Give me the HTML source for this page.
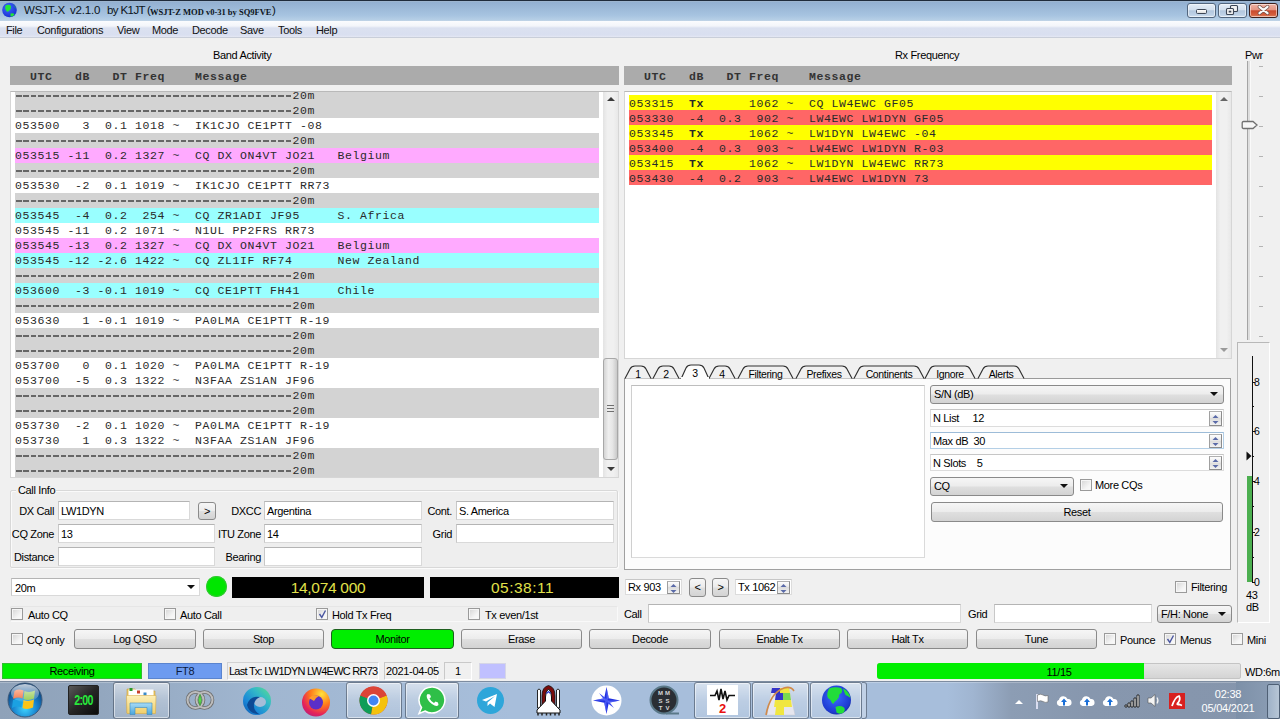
<!DOCTYPE html><html><head><meta charset="utf-8"><title>WSJT-X</title><style>
*{box-sizing:border-box;margin:0;padding:0}
html,body{width:1280px;height:719px;overflow:hidden;background:#f0f0f0;font-family:"Liberation Sans",sans-serif;font-size:11px;color:#000}
.a{position:absolute}
.t{position:absolute;white-space:pre;line-height:13px;letter-spacing:-0.35px}
.m{font-family:"Liberation Mono",monospace;font-size:11.5px;letter-spacing:0.6px;white-space:pre;line-height:15px;height:15px;color:#2a2a2a}
.fld{position:absolute;background:#fff;border:1px solid #d9d9d9;border-top-color:#b4b4b4;border-left-color:#c8c8c8}
.btn{position:absolute;border:1px solid #8a8a8a;border-radius:3px;background:linear-gradient(#f6f6f6 0%,#ececec 48%,#dfdfdf 52%,#d3d3d3 100%);text-align:center;white-space:pre;letter-spacing:-0.35px}
.cb{position:absolute;width:12px;height:12px;border:1px solid #9a9a9a;background:linear-gradient(135deg,#d4d4d4,#f4f4f4 65%,#fbfbfb);box-shadow:inset 0 0 0 1px #f6f6f6}
</style></head><body>
<div class="a" style="left:0px;top:0px;width:1280px;height:1px;background:#1f2b3b"></div>
<div class="a" style="left:0px;top:1px;width:1280px;height:20px;background:linear-gradient(#a8bbcf 0px,#93b0d1 1px,#a6c3e0 14px,#b6cfe6 19px,#c5d5e5 20px)"></div>
<svg class="a" style="left:1px;top:2px" width="17" height="16" viewBox="0 0 17 16">
<defs><radialGradient id="gl" cx="0.4" cy="0.35" r="0.7"><stop offset="0" stop-color="#3d6bff"/><stop offset="1" stop-color="#1a2bd0"/></radialGradient></defs>
<circle cx="8.5" cy="8" r="7.3" fill="url(#gl)"/>
<path d="M4.5 3.5 Q8 2 10 4 Q10.5 7 8 9 Q6 10.5 5 8.5 Q3.5 6 4.5 3.5Z" fill="#22e63a"/>
<path d="M9.5 11.5 Q12.5 10.5 13.5 12.5 Q11.5 15 9.5 14.2Z" fill="#22e63a"/>
<path d="M12 2.5 Q15 4 15.5 7 Q14 6 12 2.5Z" fill="#22c040" opacity="0.7"/>
</svg>
<div class="t" style="left:24px;top:4px;font-size:11.5px;letter-spacing:-0.2px;color:#0c1420">WSJT-X</div>
<div class="t" style="left:70px;top:4px;font-size:11.5px;letter-spacing:-0.2px;color:#0c1420">v2.1.0</div>
<div class="t" style="left:107px;top:4px;font-size:11.5px;letter-spacing:-0.6px;color:#0c1420">by K1JT</div>
<div class="t" style="left:147px;top:4px;font-size:11.5px;color:#0c1420">(</div>
<div class="t" style="left:150px;top:6px;font-family:'Liberation Serif',serif;font-weight:bold;font-size:8.5px;letter-spacing:0;color:#0c1420">WSJT-Z MOD v0-31 by SQ9FVE</div>
<div class="t" style="left:272px;top:4px;font-size:11.5px;color:#0c1420">)</div>
<div class="a" style="left:1187px;top:3px;width:29px;height:15px;background:linear-gradient(#e4edf7 0%,#d3e0ef 45%,#b3c7de 52%,#bfd2e7 85%,#d6e4f2 100%);border:1px solid #52667e;border-radius:3px;box-shadow:inset 0 0 0 1px rgba(255,255,255,0.5)"></div>
<div class="a" style="left:1218px;top:3px;width:29px;height:15px;background:linear-gradient(#e4edf7 0%,#d3e0ef 45%,#b3c7de 52%,#bfd2e7 85%,#d6e4f2 100%);border:1px solid #52667e;border-radius:3px;box-shadow:inset 0 0 0 1px rgba(255,255,255,0.5)"></div>
<div class="a" style="left:1249px;top:3px;width:29px;height:15px;background:linear-gradient(#efb2a4 0%,#e49583 45%,#c94a2e 52%,#d4603f 85%,#e58a6a 100%);border:1px solid #3e201c;border-radius:3px;box-shadow:inset 0 0 0 1px rgba(255,255,255,0.5)"></div>
<div class="a" style="left:1196px;top:9px;width:11px;height:5px;background:linear-gradient(#fff,#dcdcdc);border:1px solid #3c4656;border-radius:1.5px"></div>
<svg class="a" style="left:1225px;top:4px" width="14" height="12" viewBox="0 0 14 12">
<rect x="5.5" y="1.5" width="7" height="6" fill="#f2f2f2" stroke="#3c4656" stroke-width="1.1" rx="1"/>
<rect x="1.5" y="4.5" width="7" height="6" fill="#f2f2f2" stroke="#3c4656" stroke-width="1.1" rx="1"/>
<rect x="3.7" y="6.7" width="2.6" height="1.8" fill="#3c4656"/>
</svg>
<svg class="a" style="left:1257px;top:5px" width="13" height="10" viewBox="0 0 13 10">
<path d="M2.5 1.8 L10.5 8.2 M10.5 1.8 L2.5 8.2" stroke="#6a4a44" stroke-width="3.6" stroke-linecap="round"/>
<path d="M2.5 1.8 L10.5 8.2 M10.5 1.8 L2.5 8.2" stroke="#fafafa" stroke-width="2.3" stroke-linecap="round"/>
</svg>
<div class="a" style="left:0px;top:21px;width:1280px;height:17px;background:linear-gradient(#fbfcfe 0px,#f3f5fa 5px,#dbe1f0 7px,#d9dff0 14px,#e4e8f3 16px)"></div>
<div class="a" style="left:0px;top:37px;width:1280px;height:1px;background:#c9ced9"></div>
<div class="t" style="left:6px;top:24px;color:#111">File</div>
<div class="t" style="left:37px;top:24px;color:#111">Configurations</div>
<div class="t" style="left:117px;top:24px;color:#111">View</div>
<div class="t" style="left:152px;top:24px;color:#111">Mode</div>
<div class="t" style="left:192px;top:24px;color:#111">Decode</div>
<div class="t" style="left:240px;top:24px;color:#111">Save</div>
<div class="t" style="left:278px;top:24px;color:#111">Tools</div>
<div class="t" style="left:316px;top:24px;color:#111">Help</div>
<div class="t" style="left:213px;top:49px;">Band Activity</div>
<div class="t" style="left:895px;top:49px;">Rx Frequency</div>
<div class="t" style="left:1245px;top:49px;">Pwr</div>
<div class="a" style="left:10px;top:66px;width:609px;height:19px;background:#ababab"></div>
<div class="a m" style="left:15px;top:69px;font-weight:bold;color:#333">  UTC   dB   DT Freq    Message</div>
<div class="a" style="left:10px;top:91px;width:609px;height:387px;background:#fff;border:1px solid #d6d6d6;border-top-color:#b9b9b9"></div>
<div class="a" style="left:11px;top:92px;width:592px;height:385px;overflow:hidden">
<div class="a m" style="left:4px;top:-4px;width:584px;background:#d3d3d3"><div class="a" style="left:1px;top:7px;width:276px;height:2px;background:repeating-linear-gradient(90deg,#666 0,#666 5.5px,transparent 5.5px,transparent 7.5px)"></div>                                     20m</div>
<div class="a m" style="left:4px;top:11px;width:584px;background:#d3d3d3"><div class="a" style="left:1px;top:7px;width:276px;height:2px;background:repeating-linear-gradient(90deg,#666 0,#666 5.5px,transparent 5.5px,transparent 7.5px)"></div>                                     20m</div>
<div class="a m" style="left:4px;top:26px;width:584px;background:#ffffff">053500   3  0.1 1018 ~  IK1CJO CE1PTT -08</div>
<div class="a m" style="left:4px;top:41px;width:584px;background:#d3d3d3"><div class="a" style="left:1px;top:7px;width:276px;height:2px;background:repeating-linear-gradient(90deg,#666 0,#666 5.5px,transparent 5.5px,transparent 7.5px)"></div>                                     20m</div>
<div class="a m" style="left:4px;top:56px;width:584px;background:#ffaaff">053515 -11  0.2 1327 ~  CQ DX ON4VT JO21   Belgium</div>
<div class="a m" style="left:4px;top:71px;width:584px;background:#d3d3d3"><div class="a" style="left:1px;top:7px;width:276px;height:2px;background:repeating-linear-gradient(90deg,#666 0,#666 5.5px,transparent 5.5px,transparent 7.5px)"></div>                                     20m</div>
<div class="a m" style="left:4px;top:86px;width:584px;background:#ffffff">053530  -2  0.1 1019 ~  IK1CJO CE1PTT RR73</div>
<div class="a m" style="left:4px;top:101px;width:584px;background:#d3d3d3"><div class="a" style="left:1px;top:7px;width:276px;height:2px;background:repeating-linear-gradient(90deg,#666 0,#666 5.5px,transparent 5.5px,transparent 7.5px)"></div>                                     20m</div>
<div class="a m" style="left:4px;top:116px;width:584px;background:#99ffff">053545  -4  0.2  254 ~  CQ ZR1ADI JF95     S. Africa</div>
<div class="a m" style="left:4px;top:131px;width:584px;background:#ffffff">053545 -11  0.2 1071 ~  N1UL PP2FRS RR73</div>
<div class="a m" style="left:4px;top:146px;width:584px;background:#ffaaff">053545 -13  0.2 1327 ~  CQ DX ON4VT JO21   Belgium</div>
<div class="a m" style="left:4px;top:161px;width:584px;background:#99ffff">053545 -12 -2.6 1422 ~  CQ ZL1IF RF74      New Zealand</div>
<div class="a m" style="left:4px;top:176px;width:584px;background:#d3d3d3"><div class="a" style="left:1px;top:7px;width:276px;height:2px;background:repeating-linear-gradient(90deg,#666 0,#666 5.5px,transparent 5.5px,transparent 7.5px)"></div>                                     20m</div>
<div class="a m" style="left:4px;top:191px;width:584px;background:#99ffff">053600  -3 -0.1 1019 ~  CQ CE1PTT FH41     Chile</div>
<div class="a m" style="left:4px;top:206px;width:584px;background:#d3d3d3"><div class="a" style="left:1px;top:7px;width:276px;height:2px;background:repeating-linear-gradient(90deg,#666 0,#666 5.5px,transparent 5.5px,transparent 7.5px)"></div>                                     20m</div>
<div class="a m" style="left:4px;top:221px;width:584px;background:#ffffff">053630   1 -0.1 1019 ~  PA0LMA CE1PTT R-19</div>
<div class="a m" style="left:4px;top:236px;width:584px;background:#d3d3d3"><div class="a" style="left:1px;top:7px;width:276px;height:2px;background:repeating-linear-gradient(90deg,#666 0,#666 5.5px,transparent 5.5px,transparent 7.5px)"></div>                                     20m</div>
<div class="a m" style="left:4px;top:251px;width:584px;background:#d3d3d3"><div class="a" style="left:1px;top:7px;width:276px;height:2px;background:repeating-linear-gradient(90deg,#666 0,#666 5.5px,transparent 5.5px,transparent 7.5px)"></div>                                     20m</div>
<div class="a m" style="left:4px;top:266px;width:584px;background:#ffffff">053700   0  0.1 1020 ~  PA0LMA CE1PTT R-19</div>
<div class="a m" style="left:4px;top:281px;width:584px;background:#ffffff">053700  -5  0.3 1322 ~  N3FAA ZS1AN JF96</div>
<div class="a m" style="left:4px;top:296px;width:584px;background:#d3d3d3"><div class="a" style="left:1px;top:7px;width:276px;height:2px;background:repeating-linear-gradient(90deg,#666 0,#666 5.5px,transparent 5.5px,transparent 7.5px)"></div>                                     20m</div>
<div class="a m" style="left:4px;top:311px;width:584px;background:#d3d3d3"><div class="a" style="left:1px;top:7px;width:276px;height:2px;background:repeating-linear-gradient(90deg,#666 0,#666 5.5px,transparent 5.5px,transparent 7.5px)"></div>                                     20m</div>
<div class="a m" style="left:4px;top:326px;width:584px;background:#ffffff">053730  -2  0.1 1020 ~  PA0LMA CE1PTT R-19</div>
<div class="a m" style="left:4px;top:341px;width:584px;background:#ffffff">053730   1  0.3 1322 ~  N3FAA ZS1AN JF96</div>
<div class="a m" style="left:4px;top:356px;width:584px;background:#d3d3d3"><div class="a" style="left:1px;top:7px;width:276px;height:2px;background:repeating-linear-gradient(90deg,#666 0,#666 5.5px,transparent 5.5px,transparent 7.5px)"></div>                                     20m</div>
<div class="a m" style="left:4px;top:371px;width:584px;background:#d3d3d3"><div class="a" style="left:1px;top:7px;width:276px;height:2px;background:repeating-linear-gradient(90deg,#666 0,#666 5.5px,transparent 5.5px,transparent 7.5px)"></div>                                     20m</div>
</div>
<div class="a" style="left:603px;top:92px;width:15px;height:385px;background:linear-gradient(90deg,#e3e3e3,#f0f0f0 30%,#f0f0f0 70%,#e8e8e8)"></div>
<svg class="a" style="left:606px;top:96px" width="10" height="6"><path d="M1 5 L5 1 L9 5Z" fill="#3a3a3a"/></svg>
<svg class="a" style="left:606px;top:466px" width="10" height="6"><path d="M1 1 L5 5 L9 1Z" fill="#3a3a3a"/></svg>
<div class="a" style="left:603px;top:358px;width:15px;height:102px;background:linear-gradient(90deg,#d4d4d4,#efefef 35%,#e6e6e6 65%,#c9c9c9);border:1px solid #a8a8a8;border-radius:3px"></div>
<div class="a" style="left:607px;top:405px;width:7px;height:1px;background:#6f6f6f"></div>
<div class="a" style="left:607px;top:408px;width:7px;height:1px;background:#6f6f6f"></div>
<div class="a" style="left:607px;top:411px;width:7px;height:1px;background:#6f6f6f"></div>
<div class="a" style="left:624px;top:66px;width:608px;height:19px;background:#ababab"></div>
<div class="a m" style="left:629px;top:69px;font-weight:bold;color:#333">  UTC   dB   DT Freq    Message</div>
<div class="a" style="left:624px;top:91px;width:608px;height:268px;background:#fff;border:1px solid #d6d6d6;border-top-color:#b9b9b9"></div>
<div class="a m" style="left:629px;top:95px;width:583px;background:#ffff00;padding-top:1px">053315  <b>Tx</b>      1062 ~  CQ LW4EWC GF05</div>
<div class="a m" style="left:629px;top:110px;width:583px;background:#ff6666;padding-top:1px">053330  -4  0.3  902 ~  LW4EWC LW1DYN GF05</div>
<div class="a m" style="left:629px;top:125px;width:583px;background:#ffff00;padding-top:1px">053345  <b>Tx</b>      1062 ~  LW1DYN LW4EWC -04</div>
<div class="a m" style="left:629px;top:140px;width:583px;background:#ff6666;padding-top:1px">053400  -4  0.3  903 ~  LW4EWC LW1DYN R-03</div>
<div class="a m" style="left:629px;top:155px;width:583px;background:#ffff00;padding-top:1px">053415  <b>Tx</b>      1062 ~  LW1DYN LW4EWC RR73</div>
<div class="a m" style="left:629px;top:170px;width:583px;background:#ff6666;padding-top:1px">053430  -4  0.2  903 ~  LW4EWC LW1DYN 73</div>
<div class="a" style="left:1216px;top:92px;width:15px;height:266px;background:linear-gradient(90deg,#e3e3e3,#f0f0f0 30%,#f0f0f0 70%,#e8e8e8)"></div>
<svg class="a" style="left:1219px;top:96px" width="10" height="6"><path d="M1 5 L5 1 L9 5Z" fill="#666"/></svg>
<svg class="a" style="left:1219px;top:347px" width="10" height="6"><path d="M1 1 L5 5 L9 1Z" fill="#9a9a9a"/></svg>
<div class="a" style="left:1247px;top:61px;width:4px;height:279px;background:#dedede;border-left:1px solid #a4a4a4;border-right:1px solid #fafafa"></div>
<div class="a" style="left:1259px;top:66px;width:4px;height:1px;background:#b4b4b4"></div>
<div class="a" style="left:1259px;top:96px;width:4px;height:1px;background:#b4b4b4"></div>
<div class="a" style="left:1259px;top:126px;width:4px;height:1px;background:#b4b4b4"></div>
<div class="a" style="left:1259px;top:156px;width:4px;height:1px;background:#b4b4b4"></div>
<div class="a" style="left:1259px;top:186px;width:4px;height:1px;background:#b4b4b4"></div>
<div class="a" style="left:1259px;top:216px;width:4px;height:1px;background:#b4b4b4"></div>
<div class="a" style="left:1259px;top:246px;width:4px;height:1px;background:#b4b4b4"></div>
<div class="a" style="left:1259px;top:276px;width:4px;height:1px;background:#b4b4b4"></div>
<div class="a" style="left:1259px;top:306px;width:4px;height:1px;background:#b4b4b4"></div>
<div class="a" style="left:1259px;top:336px;width:4px;height:1px;background:#b4b4b4"></div>
<svg class="a" style="left:1241px;top:120px" width="18" height="10" viewBox="0 0 18 10">
<path d="M2.5 1.5 H12 L16 5 L12 8.5 H2.5 Q1.2 8.5 1.2 7 V3 Q1.2 1.5 2.5 1.5Z" fill="#f6f6f6" stroke="#707070" stroke-width="1.3"/></svg>
<div class="a" style="left:1237px;top:342px;width:33px;height:281px;border:1px solid #b8b8b8;border-right-color:#fff;border-bottom-color:#fff;background:#f0f0f0"></div>
<div class="a" style="left:1252px;top:356px;width:1px;height:227px;background:#111"></div>
<div class="a" style="left:1247px;top:476px;width:5px;height:106px;background:#4caf50"></div>
<svg class="a" style="left:1246px;top:451px" width="6" height="10"><path d="M0.5 0.5 L5.5 5 L0.5 9.5Z" fill="#111"/></svg>
<div class="a" style="left:1252px;top:382px;width:3px;height:1px;background:#111"></div>
<div class="t" style="left:1254px;top:376px;font-size:10.5px">8</div>
<div class="a" style="left:1252px;top:431px;width:3px;height:1px;background:#111"></div>
<div class="t" style="left:1254px;top:425px;font-size:10.5px">6</div>
<div class="a" style="left:1252px;top:481px;width:3px;height:1px;background:#111"></div>
<div class="t" style="left:1254px;top:475px;font-size:10.5px">4</div>
<div class="a" style="left:1252px;top:532px;width:3px;height:1px;background:#111"></div>
<div class="t" style="left:1254px;top:526px;font-size:10.5px">2</div>
<div class="a" style="left:1252px;top:582px;width:3px;height:1px;background:#111"></div>
<div class="t" style="left:1254px;top:576px;font-size:10.5px">0</div>
<div class="a" style="left:1252px;top:406px;width:2px;height:1px;background:#111"></div>
<div class="a" style="left:1252px;top:456px;width:2px;height:1px;background:#111"></div>
<div class="a" style="left:1252px;top:506px;width:2px;height:1px;background:#111"></div>
<div class="a" style="left:1252px;top:557px;width:2px;height:1px;background:#111"></div>
<div class="t" style="left:1246px;top:589px;">43</div>
<div class="t" style="left:1246px;top:601px;">dB</div>
<div class="a" style="left:624px;top:378px;width:607px;height:192px;background:#fcfcfc;border:1px solid #a0a0a0;border-top-color:#9a9a9a"></div>
<svg class="a" style="left:620px;top:362px" width="420" height="20" viewBox="620 362 420 20"><path d="M625 378.5 L630 369 Q631.5 366 635 366 L641 366 Q644.5 366 646 369 L651 378.5 Z" fill="#f0f0f0" stroke="none"/><path d="M625 378.5 L630 369 Q631.5 366 635 366 L641 366 Q644.5 366 646 369 L651 378.5" fill="none" stroke="#303030" stroke-width="1.15"/><path d="M653 378.5 L658 369 Q659.5 366 663 366 L669 366 Q672.5 366 674 369 L679 378.5 Z" fill="#f0f0f0" stroke="none"/><path d="M653 378.5 L658 369 Q659.5 366 663 366 L669 366 Q672.5 366 674 369 L679 378.5" fill="none" stroke="#303030" stroke-width="1.15"/><path d="M681 379 L686 368 Q687.5 365 691 365 L699 365 Q702.5 365 704 368 L709 379 Z" fill="#fcfcfc" stroke="none"/><path d="M681 379 L686 368 Q687.5 365 691 365 L699 365 Q702.5 365 704 368 L709 379" fill="none" stroke="#303030" stroke-width="1.15"/><path d="M709 378.5 L714 369 Q715.5 366 719 366 L725 366 Q728.5 366 730 369 L735 378.5 Z" fill="#f0f0f0" stroke="none"/><path d="M709 378.5 L714 369 Q715.5 366 719 366 L725 366 Q728.5 366 730 369 L735 378.5" fill="none" stroke="#303030" stroke-width="1.15"/><path d="M738 378.5 L743 369 Q744.5 366 748 366 L783 366 Q786.5 366 788 369 L793 378.5 Z" fill="#f0f0f0" stroke="none"/><path d="M738 378.5 L743 369 Q744.5 366 748 366 L783 366 Q786.5 366 788 369 L793 378.5" fill="none" stroke="#303030" stroke-width="1.15"/><path d="M796 378.5 L801 369 Q802.5 366 806 366 L842 366 Q845.5 366 847 369 L852 378.5 Z" fill="#f0f0f0" stroke="none"/><path d="M796 378.5 L801 369 Q802.5 366 806 366 L842 366 Q845.5 366 847 369 L852 378.5" fill="none" stroke="#303030" stroke-width="1.15"/><path d="M854 378.5 L859 369 Q860.5 366 864 366 L914 366 Q917.5 366 919 369 L924 378.5 Z" fill="#f0f0f0" stroke="none"/><path d="M854 378.5 L859 369 Q860.5 366 864 366 L914 366 Q917.5 366 919 369 L924 378.5" fill="none" stroke="#303030" stroke-width="1.15"/><path d="M925 378.5 L930 369 Q931.5 366 935 366 L965 366 Q968.5 366 970 369 L975 378.5 Z" fill="#f0f0f0" stroke="none"/><path d="M925 378.5 L930 369 Q931.5 366 935 366 L965 366 Q968.5 366 970 369 L975 378.5" fill="none" stroke="#303030" stroke-width="1.15"/><path d="M978 378.5 L983 369 Q984.5 366 988 366 L1014 366 Q1017.5 366 1019 369 L1024 378.5 Z" fill="#f0f0f0" stroke="none"/><path d="M978 378.5 L983 369 Q984.5 366 988 366 L1014 366 Q1017.5 366 1019 369 L1024 378.5" fill="none" stroke="#303030" stroke-width="1.15"/></svg>
<div class="a" style="left:681px;top:377px;width:28px;height:3px;background:#fcfcfc"></div>
<div class="t" style="left:625px;top:368px;width:26px;text-align:center;font-size:10.5px">1</div>
<div class="t" style="left:653px;top:368px;width:26px;text-align:center;font-size:10.5px">2</div>
<div class="t" style="left:681px;top:367px;width:28px;text-align:center;font-size:10.5px">3</div>
<div class="t" style="left:709px;top:368px;width:26px;text-align:center;font-size:10.5px">4</div>
<div class="t" style="left:738px;top:368px;width:55px;text-align:center;font-size:10.5px">Filtering</div>
<div class="t" style="left:796px;top:368px;width:56px;text-align:center;font-size:10.5px">Prefixes</div>
<div class="t" style="left:854px;top:368px;width:70px;text-align:center;font-size:10.5px">Continents</div>
<div class="t" style="left:925px;top:368px;width:50px;text-align:center;font-size:10.5px">Ignore</div>
<div class="t" style="left:978px;top:368px;width:46px;text-align:center;font-size:10.5px">Alerts</div>
<div class="a" style="left:631px;top:385px;width:294px;height:173px;background:#fff;border:1px solid #dadada;border-top-color:#bdbdbd;border-left-color:#cfcfcf"></div>
<div class="btn" style="left:930px;top:385px;width:294px;height:19px;text-align:left;padding-left:3px;line-height:17px">S/N (dB)</div>
<svg class="a" style="left:1209px;top:391px" width="10" height="6"><path d="M1 1 L9 1 L5 5Z" fill="#111"/></svg>
<div class="a" style="left:930px;top:409px;width:294px;height:18px;background:#fff;border:1px solid #dcdcdc;border-top-color:#c6c6c6"></div>
<div class="t" style="left:933px;top:412px">N List     12</div>
<div class="a" style="left:1209px;top:411px;width:13px;height:15px;border:1px solid #8c8c8c;border-top-color:#b0b0b0;border-left-color:#a0a0a0;background:linear-gradient(#fdfdfd,#e9e9e9 45%,#dcdcdc 50%,#f2f2f2)"></div>
<svg class="a" style="left:1210px;top:412px" width="11" height="13"><path d="M2.5 6 L5.5 3 L8.5 6Z" fill="#5a6aa8"/><path d="M2.5 9 L5.5 12 L8.5 9Z" fill="#5a6aa8"/></svg>
<div class="a" style="left:930px;top:432px;width:294px;height:17px;background:#fff;border:1px solid #b4cfe6;border-top-color:#9dbcd8"></div>
<div class="t" style="left:933px;top:435px">Max dB  30</div>
<div class="a" style="left:1209px;top:434px;width:13px;height:14px;border:1px solid #8c8c8c;border-top-color:#b0b0b0;border-left-color:#a0a0a0;background:linear-gradient(#fdfdfd,#e9e9e9 45%,#dcdcdc 50%,#f2f2f2)"></div>
<svg class="a" style="left:1210px;top:435px" width="11" height="12"><path d="M2.5 5 L5.5 2 L8.5 5Z" fill="#5a6aa8"/><path d="M2.5 8 L5.5 11 L8.5 8Z" fill="#5a6aa8"/></svg>
<div class="a" style="left:930px;top:454px;width:294px;height:17px;background:#fff;border:1px solid #dcdcdc;border-top-color:#c6c6c6"></div>
<div class="t" style="left:933px;top:457px">N Slots    5</div>
<div class="a" style="left:1209px;top:456px;width:13px;height:14px;border:1px solid #8c8c8c;border-top-color:#b0b0b0;border-left-color:#a0a0a0;background:linear-gradient(#fdfdfd,#e9e9e9 45%,#dcdcdc 50%,#f2f2f2)"></div>
<svg class="a" style="left:1210px;top:457px" width="11" height="12"><path d="M2.5 5 L5.5 2 L8.5 5Z" fill="#5a6aa8"/><path d="M2.5 8 L5.5 11 L8.5 8Z" fill="#5a6aa8"/></svg>
<div class="btn" style="left:930px;top:477px;width:144px;height:19px;text-align:left;padding-left:3px;line-height:17px">CQ</div>
<svg class="a" style="left:1059px;top:483px" width="10" height="6"><path d="M1 1 L9 1 L5 5Z" fill="#111"/></svg>
<div class="cb" style="left:1080px;top:479px"></div>
<div class="t" style="left:1095px;top:479px;">More CQs</div>
<div class="btn" style="left:931px;top:502px;width:292px;height:20px;line-height:18px">Reset</div>
<div class="a" style="left:10px;top:490px;width:608px;height:78px;border:1px solid #d8d8d8;border-radius:2px;background:#eeeeee;box-shadow:1px 1px 0 #fbfbfb, inset 1px 1px 0 #fafafa"></div>
<div class="a" style="left:16px;top:484px;width:40px;height:12px;background:#f0f0f0"></div>
<div class="t" style="left:18px;top:484px;">Call Info</div>
<div class="t" style="left:-46px;top:505px;width:100px;text-align:right">DX Call</div>
<div class="fld" style="left:58px;top:501px;width:132px;height:19px"></div>
<div class="t" style="left:61px;top:505px;">LW1DYN</div>
<div class="btn" style="left:198px;top:502px;width:18px;height:18px;line-height:16px">&gt;</div>
<div class="t" style="left:161px;top:505px;width:100px;text-align:right">DXCC</div>
<div class="fld" style="left:264px;top:501px;width:158px;height:19px"></div>
<div class="t" style="left:267px;top:505px;">Argentina</div>
<div class="t" style="left:352px;top:505px;width:100px;text-align:right">Cont.</div>
<div class="fld" style="left:456px;top:501px;width:158px;height:19px"></div>
<div class="t" style="left:459px;top:505px;">S. America</div>
<div class="t" style="left:-46px;top:528px;width:100px;text-align:right">CQ Zone</div>
<div class="fld" style="left:58px;top:524px;width:157px;height:19px"></div>
<div class="t" style="left:61px;top:528px;">13</div>
<div class="t" style="left:161px;top:528px;width:100px;text-align:right">ITU Zone</div>
<div class="fld" style="left:264px;top:524px;width:158px;height:19px"></div>
<div class="t" style="left:267px;top:528px;">14</div>
<div class="t" style="left:352px;top:528px;width:100px;text-align:right">Grid</div>
<div class="fld" style="left:456px;top:524px;width:158px;height:19px"></div>
<div class="t" style="left:-46px;top:551px;width:100px;text-align:right">Distance</div>
<div class="fld" style="left:58px;top:547px;width:157px;height:19px"></div>
<div class="t" style="left:161px;top:551px;width:100px;text-align:right">Bearing</div>
<div class="fld" style="left:264px;top:547px;width:158px;height:19px"></div>
<div class="fld" style="left:11px;top:578px;width:189px;height:18px"></div>
<div class="t" style="left:15px;top:582px;">20m</div>
<svg class="a" style="left:186px;top:584px" width="10" height="6"><path d="M1 1 L9 1 L5 5Z" fill="#111"/></svg>
<div class="a" style="left:206px;top:576px;width:21px;height:21px;border-radius:50%;background:#00e600;box-shadow:inset 0 0 1px 1px #36c536"></div>
<div class="a" style="left:232px;top:577px;width:192px;height:21px;background:#000"></div>
<div class="t" style="left:232px;top:579px;width:192px;line-height:18px;text-align:center;font-size:15.5px;letter-spacing:-0.3px;color:#e2e24a">14,074 000</div>
<div class="a" style="left:430px;top:577px;width:189px;height:21px;background:#000"></div>
<div class="t" style="left:428px;top:579px;width:189px;line-height:18px;text-align:center;font-size:15.5px;letter-spacing:0.5px;color:#e2e24a">05:38:11</div>
<div class="a" style="left:625px;top:579px;width:57px;height:16px;background:#fff;border:1px solid #dcdcdc;border-top-color:#c6c6c6"></div>
<div class="t" style="left:628px;top:581px">Rx 903</div>
<div class="a" style="left:667px;top:581px;width:13px;height:13px;border:1px solid #8c8c8c;border-top-color:#b0b0b0;border-left-color:#a0a0a0;background:linear-gradient(#fdfdfd,#e9e9e9 45%,#dcdcdc 50%,#f2f2f2)"></div>
<svg class="a" style="left:668px;top:582px" width="11" height="11"><path d="M2.5 5 L5.5 2 L8.5 5Z" fill="#5a6aa8"/><path d="M2.5 8 L5.5 11 L8.5 8Z" fill="#5a6aa8"/></svg>
<div class="btn" style="left:689px;top:578px;width:17px;height:19px;line-height:17px">&lt;</div>
<div class="btn" style="left:712px;top:578px;width:17px;height:19px;line-height:17px">&gt;</div>
<div class="a" style="left:735px;top:579px;width:57px;height:16px;background:#fff;border:1px solid #dcdcdc;border-top-color:#c6c6c6"></div>
<div class="t" style="left:738px;top:581px">Tx 1062</div>
<div class="a" style="left:777px;top:581px;width:13px;height:13px;border:1px solid #8c8c8c;border-top-color:#b0b0b0;border-left-color:#a0a0a0;background:linear-gradient(#fdfdfd,#e9e9e9 45%,#dcdcdc 50%,#f2f2f2)"></div>
<svg class="a" style="left:778px;top:582px" width="11" height="11"><path d="M2.5 5 L5.5 2 L8.5 5Z" fill="#5a6aa8"/><path d="M2.5 8 L5.5 11 L8.5 8Z" fill="#5a6aa8"/></svg>
<div class="cb" style="left:1175px;top:581px"></div>
<div class="t" style="left:1191px;top:581px;">Filtering</div>
<div class="a" style="left:10px;top:606px;width:608px;height:16px;border:1px solid #e6e6e6;border-right-color:#f9f9f9;border-bottom-color:#f9f9f9;background:#efefef;border-radius:2px"></div>
<div class="cb" style="left:11px;top:608px"></div>
<div class="t" style="left:28px;top:609px;">Auto CQ</div>
<div class="cb" style="left:164px;top:608px"></div>
<div class="t" style="left:180px;top:609px;">Auto Call</div>
<div class="cb" style="left:316px;top:608px"></div>
<svg class="a" style="left:318px;top:609px" width="9" height="10"><path d="M1.5 5 L3.8 8.3 L7.5 1.5" stroke="#4a56a0" stroke-width="1.4" fill="none"/></svg>
<div class="t" style="left:332px;top:609px;">Hold Tx Freq</div>
<div class="cb" style="left:468px;top:608px"></div>
<div class="t" style="left:485px;top:609px;">Tx even/1st</div>
<div class="t" style="left:624px;top:608px;">Call</div>
<div class="fld" style="left:648px;top:604px;width:313px;height:19px"></div>
<div class="t" style="left:968px;top:608px;">Grid</div>
<div class="fld" style="left:994px;top:604px;width:158px;height:19px"></div>
<div class="btn" style="left:1157px;top:605px;width:75px;height:18px;text-align:left;padding-left:3px;line-height:16px">F/H: None</div>
<svg class="a" style="left:1217px;top:611px" width="10" height="6"><path d="M1 1 L9 1 L5 5Z" fill="#111"/></svg>
<div class="cb" style="left:11px;top:633px"></div>
<div class="t" style="left:27px;top:634px;">CQ only</div>
<div class="btn" style="left:74px;top:629px;width:122px;height:20px;line-height:18px">Log QSO</div>
<div class="btn" style="left:203px;top:629px;width:121px;height:20px;line-height:18px">Stop</div>
<div class="btn" style="left:461px;top:629px;width:121px;height:20px;line-height:18px">Erase</div>
<div class="btn" style="left:589px;top:629px;width:122px;height:20px;line-height:18px">Decode</div>
<div class="btn" style="left:719px;top:629px;width:121px;height:20px;line-height:18px">Enable Tx</div>
<div class="btn" style="left:847px;top:629px;width:121px;height:20px;line-height:18px">Halt Tx</div>
<div class="btn" style="left:976px;top:629px;width:121px;height:20px;line-height:18px">Tune</div>
<div class="btn" style="left:331px;top:629px;width:123px;height:20px;line-height:18px;background:#00ee00;border-color:#1f5f1f;border-radius:4px">Monitor</div>
<div class="cb" style="left:1104px;top:633px"></div>
<div class="t" style="left:1120px;top:634px;">Pounce</div>
<div class="cb" style="left:1164px;top:633px"></div>
<svg class="a" style="left:1166px;top:634px" width="9" height="10"><path d="M1.5 5 L3.8 8.3 L7.5 1.5" stroke="#4a56a0" stroke-width="1.4" fill="none"/></svg>
<div class="t" style="left:1180px;top:634px;">Menus</div>
<div class="cb" style="left:1231px;top:633px"></div>
<div class="t" style="left:1247px;top:634px;">Mini</div>
<div class="a" style="left:2px;top:663px;width:140px;height:16px;background:#00ee00;border:1px solid #2fbf2f;text-align:center;line-height:14px;letter-spacing:-0.35px">Receiving</div>
<div class="a" style="left:148px;top:663px;width:74px;height:16px;background:#6d9bf0;border:1px solid #5a84cf;text-align:center;line-height:14px;letter-spacing:-0.35px;color:#0a1a40">FT8</div>
<div class="a" style="left:227px;top:662px;width:152px;height:18px;border:1px solid #d2d2d2;border-right-color:#fff;border-bottom-color:#fff"></div>
<div class="t" style="left:229px;top:665px;letter-spacing:-0.75px">Last Tx: LW1DYN LW4EWC RR73</div>
<div class="a" style="left:384px;top:662px;width:54px;height:18px;border:1px solid #c9c9c9;border-right-color:#fff;border-bottom-color:#fff"></div>
<div class="t" style="left:386px;top:665px;">2021-04-05</div>
<div class="a" style="left:444px;top:662px;width:28px;height:18px;border:1px solid #c9c9c9;border-right-color:#fff;border-bottom-color:#fff"></div>
<div class="t" style="left:444px;top:665px;width:28px;text-align:center">1</div>
<div class="a" style="left:479px;top:663px;width:27px;height:16px;background:#c0c0ff;border:1px solid #d6d6e6"></div>
<div class="a" style="left:877px;top:663px;width:364px;height:16px;background:linear-gradient(#e6e6e6,#d4d4d4);border:1px solid #c4c4c4;border-radius:2px"></div>
<div class="a" style="left:877px;top:663px;width:267px;height:16px;background:#00ee00;border-radius:3px 0 0 3px"></div>
<div class="t" style="left:877px;top:666px;width:364px;text-align:center">11/15</div>
<div class="t" style="left:1245px;top:666px;">WD:6m</div>
<div class="a" style="left:0;top:681px;width:1280px;height:38px;background:linear-gradient(90deg,#8fa2b9 0%,#93a7bf 8%,#a0b6d0 20%,#a7bedb 40%,#a7bedb 74%,#a0b5d1 76%,#8c9db4 79%,#8797ae 85%,#8595ac 100%)"></div>
<div class="a" style="left:0px;top:681px;width:1280px;height:1px;background:#7d8ca0"></div>
<div class="a" style="left:0px;top:682px;width:1280px;height:1px;background:rgba(255,255,255,0.25)"></div>
<div class="a" style="left:862px;top:682px;width:5px;height:37px;border:1px solid rgba(40,55,75,0.55);border-left:none;border-radius:0 3px 3px 0;background:rgba(255,255,255,0.3)"></div>
<div class="a" style="left:113px;top:682px;width:57px;height:37px;border:1px solid rgba(40,55,75,0.55);border-radius:3px;background:linear-gradient(rgba(255,255,255,0.55),rgba(255,255,255,0.25) 50%,rgba(255,255,255,0.12));box-shadow:inset 0 0 0 1px rgba(255,255,255,0.5)"></div>
<div class="a" style="left:346px;top:682px;width:56px;height:37px;border:1px solid rgba(40,55,75,0.55);border-radius:3px;background:linear-gradient(rgba(255,255,255,0.55),rgba(255,255,255,0.25) 50%,rgba(255,255,255,0.12));box-shadow:inset 0 0 0 1px rgba(255,255,255,0.5)"></div>
<div class="a" style="left:405px;top:682px;width:54px;height:37px;border:1px solid rgba(40,55,75,0.55);border-radius:3px;background:linear-gradient(rgba(255,255,255,0.55),rgba(255,255,255,0.25) 50%,rgba(255,255,255,0.12));box-shadow:inset 0 0 0 1px rgba(255,255,255,0.5)"></div>
<div class="a" style="left:694px;top:682px;width:57px;height:37px;border:1px solid rgba(40,55,75,0.55);border-radius:3px;background:linear-gradient(rgba(255,255,255,0.55),rgba(255,255,255,0.25) 50%,rgba(255,255,255,0.12));box-shadow:inset 0 0 0 1px rgba(255,255,255,0.5)"></div>
<div class="a" style="left:752px;top:682px;width:57px;height:37px;border:1px solid rgba(40,55,75,0.55);border-radius:3px;background:linear-gradient(rgba(255,255,255,0.55),rgba(255,255,255,0.25) 50%,rgba(255,255,255,0.12));box-shadow:inset 0 0 0 1px rgba(255,255,255,0.5)"></div>
<div class="a" style="left:810px;top:682px;width:52px;height:37px;border:1px solid rgba(40,55,75,0.55);border-radius:3px;background:linear-gradient(rgba(255,255,255,0.55),rgba(255,255,255,0.25) 50%,rgba(255,255,255,0.12));box-shadow:inset 0 0 0 1px rgba(255,255,255,0.5)"></div>
<svg class="a" style="left:7px;top:682px" width="36" height="36" viewBox="0 0 36 36">
<defs><radialGradient id="orb" cx="0.5" cy="0.75" r="0.75"><stop offset="0" stop-color="#3fd4ff"/><stop offset="0.45" stop-color="#1a86d0"/><stop offset="0.8" stop-color="#0d4f8f"/><stop offset="1" stop-color="#0a3566"/></radialGradient>
<linearGradient id="orbh" x1="0" y1="0" x2="0" y2="1"><stop offset="0" stop-color="#fff" stop-opacity="0.75"/><stop offset="1" stop-color="#fff" stop-opacity="0.08"/></linearGradient></defs>
<circle cx="18" cy="18" r="17" fill="url(#orb)" stroke="#3d5a7a" stroke-width="1"/>
<path d="M7.5 9 Q11.5 6.5 16.5 8.5 L15.5 16.5 Q11 14.5 6 17Z" fill="#f4622a"/>
<path d="M17.5 9 Q22.5 11 28 8.5 L27 16.5 Q21.5 19 16.5 17Z" fill="#8cc63f"/>
<path d="M6 18 Q11 15.5 15.5 17.5 L14.5 25.5 Q10 23.5 5 26Z" fill="#1ba1e2"/>
<path d="M16.5 18 Q21.5 20 27 17.5 L26 25.5 Q20.5 28 15.5 26Z" fill="#fdc418"/>
<ellipse cx="18" cy="11" rx="14" ry="9" fill="url(#orbh)"/>
</svg>
<svg class="a" style="left:68px;top:685px" width="31" height="30" viewBox="0 0 31 30">
<defs><linearGradient id="clk" x1="0" y1="0" x2="1" y2="1"><stop offset="0" stop-color="#5a5a5a"/><stop offset="0.5" stop-color="#262626"/><stop offset="1" stop-color="#0a0a0a"/></linearGradient></defs>
<rect x="0.5" y="0.5" width="30" height="29" fill="url(#clk)" stroke="#222" rx="1.5"/>
<text x="15.5" y="19.5" text-anchor="middle" font-family="Liberation Sans" font-weight="bold" font-size="13" fill="#28e83c" letter-spacing="-0.8" transform="translate(15.5 0) scale(0.82 1.15) translate(-15.5 -2.5)">2:00</text>
</svg>
<svg class="a" style="left:125px;top:687px" width="33" height="29" viewBox="0 0 33 29">
<defs><linearGradient id="fld" x1="0" y1="0" x2="0" y2="1"><stop offset="0" stop-color="#fdf0b8"/><stop offset="1" stop-color="#f1cf6a"/></linearGradient>
<linearGradient id="fbl" x1="0" y1="0" x2="0" y2="1"><stop offset="0" stop-color="#a8dcf6"/><stop offset="1" stop-color="#4aa6dc"/></linearGradient></defs>
<path d="M2 2 H10 L12 4 H30 V26 H2Z" fill="#e9c660" stroke="#c9a040" stroke-width="0.6"/>
<rect x="3.5" y="2.5" width="25" height="7" fill="#fff"/>
<rect x="4.5" y="1" width="3" height="3" fill="#2a9a2a"/><rect x="12" y="3.5" width="3" height="3" fill="#c8402a"/><rect x="18.5" y="5.5" width="3" height="3" fill="#3a8ac8"/>
<path d="M1.5 8.5 H31 L30.5 26.5 H2Z" fill="url(#fld)" stroke="#d8b050" stroke-width="0.6"/>
<path d="M5 16 H27 V27.5 H22 V20.5 H10 V27.5 H5Z" fill="url(#fbl)" stroke="#3a8ac0" stroke-width="0.6"/>
</svg>
<svg class="a" style="left:185px;top:688px" width="30" height="24" viewBox="0 0 30 24">
<circle cx="10.5" cy="12" r="8" fill="none" stroke="#6e6e6e" stroke-width="3.6"/>
<circle cx="19.5" cy="12" r="8" fill="none" stroke="#6e6e6e" stroke-width="3.6"/>
<circle cx="10.5" cy="12" r="8" fill="none" stroke="#bdbdbd" stroke-width="2"/>
<circle cx="19.5" cy="12" r="8" fill="none" stroke="#bdbdbd" stroke-width="2"/>
<path d="M15 6.2 Q18 12 15 17.8 Q12 12 15 6.2Z" fill="#5ee24a" stroke="#3a8a3a" stroke-width="0.6"/>
</svg>
<svg class="a" style="left:241px;top:685px" width="32" height="32" viewBox="0 0 32 32">
<defs><linearGradient id="edg" x1="1" y1="0" x2="0" y2="1"><stop offset="0" stop-color="#5ee08a"/><stop offset="0.35" stop-color="#32b8c8"/><stop offset="0.7" stop-color="#1a86d8"/><stop offset="1" stop-color="#0b56a8"/></linearGradient></defs>
<circle cx="16" cy="16" r="14" fill="url(#edg)"/>
<ellipse cx="19" cy="17" rx="6" ry="5" fill="#a5bdd8"/>
<path d="M6 20 Q8 29 19 29.5 Q12 26 13 19 Q14 14 19 12 Q9 10 6 20Z" fill="#0c4a96"/>
</svg>
<svg class="a" style="left:300px;top:686px" width="32" height="31" viewBox="0 0 32 31">
<defs><radialGradient id="ff" cx="0.7" cy="0.2" r="0.9"><stop offset="0" stop-color="#ffe23a"/><stop offset="0.45" stop-color="#ff7a1a"/><stop offset="0.8" stop-color="#e5225a"/><stop offset="1" stop-color="#b8207a"/></radialGradient></defs>
<circle cx="16" cy="16.5" r="14" fill="url(#ff)"/>
<circle cx="16" cy="16.5" r="7" fill="#5a2fc8"/>
<path d="M9 12 Q13 8 19 10 Q15 12 14 15Z" fill="#ff9a2a"/>
</svg>
<svg class="a" style="left:358px;top:685px" width="31" height="31" viewBox="0 0 31 31">
<circle cx="15.5" cy="15.5" r="14" fill="#db4437"/>
<path d="M15.5 15.5 L28.6 10.5 A14 14 0 0 1 13 29.3Z" fill="#f4c20d"/>
<path d="M15.5 15.5 L13 29.3 A14 14 0 0 1 2.4 10.5Z" fill="#0f9d58"/>
<path d="M15.5 15.5 L2.4 10.5 A14 14 0 0 1 15.5 1.5 A14 14 0 0 1 28.6 10.5Z" fill="#db4437"/>
<circle cx="15.5" cy="15.5" r="6.5" fill="#fff"/>
<circle cx="15.5" cy="15.5" r="5" fill="#4285f4"/>
</svg>
<svg class="a" style="left:417px;top:685px" width="31" height="31" viewBox="0 0 31 31">
<path d="M15.5 2 A13 13 0 1 1 8 26 L2 28.5 L4.5 22.5 A13 13 0 0 1 15.5 2Z" fill="#2fbf48" stroke="#fff" stroke-width="1.5"/>
<path d="M10.5 9 Q9 10.5 10 13 Q12 18 17.5 20.5 Q20 21.5 21.5 20 L21 17.5 L18.5 16.5 L17 18 Q14 16.5 12.5 13.5 L14 12 L13 9.5Z" fill="#fff"/>
</svg>
<svg class="a" style="left:476px;top:686px" width="29" height="29" viewBox="0 0 29 29">
<circle cx="14.5" cy="14.5" r="13.5" fill="#2ea6da"/>
<path d="M6 14 L21 8 L18.5 21 L14 17.5 L11.5 20 L11.5 16.5 L19 10 L10 15.5Z" fill="#fff"/>
</svg>
<svg class="a" style="left:533px;top:684px" width="31" height="33" viewBox="0 0 31 33">
<path d="M15.5 1.5 Q22 3 22 12 V24 H9 V12 Q9 3 15.5 1.5Z" fill="#7a0c0c" stroke="#111" stroke-width="0.8"/>
<path d="M4.5 6 Q6 4 7.5 6 V24 H4.5Z" fill="#fff" stroke="#111" stroke-width="0.9"/>
<path d="M23.5 6 Q25 4 26.5 6 V24 H23.5Z" fill="#fff" stroke="#111" stroke-width="0.9"/>
<path d="M15.5 5 Q18.5 7 18.5 13 V17 L27 26 V29 H4 V26 L12.5 17 V13 Q12.5 7 15.5 5Z" fill="#fff" stroke="#111" stroke-width="1"/>
<path d="M13.5 9.5 L15.5 7.5 L17.5 9.5" stroke="#2a3ad0" stroke-width="1.2" fill="none"/>
<path d="M5 29 V31.5 M9 29 V31.5 M13.5 29 V31.5 M17.5 29 V31.5 M22 29 V31.5 M26 29 V31.5" stroke="#222" stroke-width="1.5"/>
</svg>
<svg class="a" style="left:591px;top:685px" width="31" height="31" viewBox="0 0 31 31">
<circle cx="15.5" cy="15.5" r="15" fill="#fff"/>
<path d="M15.5 2 L17.8 13.2 L29 15.5 L17.8 17.8 L15.5 29 L13.2 17.8 L2 15.5 L13.2 13.2Z" fill="#1f2fe0"/>
<path d="M8 8 L16.5 14.5 L23 23 L14.5 16.5Z M23 8 L16.5 14.5 L8 23 L14.5 16.5Z" fill="#3a4af0"/>
<path d="M15.5 2 L17.8 13.2 L15.5 15.5Z M29 15.5 L17.8 17.8 L15.5 15.5Z M15.5 29 L13.2 17.8 L15.5 15.5Z M2 15.5 L13.2 13.2 L15.5 15.5Z" fill="#6a78ff" opacity="0.6"/>
</svg>
<svg class="a" style="left:649px;top:685px" width="32" height="31" viewBox="0 0 32 31">
<circle cx="15" cy="15" r="13.5" fill="#2a2e34" stroke="#5a7888" stroke-width="2"/>
<path d="M17 28.5 H30" stroke="#5a7888" stroke-width="2"/>
<g font-family="Liberation Sans" font-weight="bold" font-size="6" fill="#d8d8d8" text-anchor="middle">
<text x="11.5" y="10">M</text><text x="18.5" y="10">M</text>
<text x="11.5" y="17.5">S</text><text x="18.5" y="17.5">S</text>
<text x="11.5" y="25">T</text><text x="18.5" y="25">V</text></g>
</svg>
<svg class="a" style="left:707px;top:685px" width="31" height="31" viewBox="0 0 31 31">
<rect x="0" y="0" width="31" height="30" fill="#fff"/>
<path d="M3 10.5 H8 L10 6 L12 15 L14 4 L16 14 L18 6 L20 15 L22 10.5 H28" stroke="#111" stroke-width="1.6" fill="none"/>
<text x="15.5" y="27.5" text-anchor="middle" font-family="Liberation Sans" font-weight="bold" font-size="13" fill="#e81010">2</text>
</svg>
<svg class="a" style="left:764px;top:685px" width="34" height="32" viewBox="0 0 34 32">
<path d="M8 2 H25 L31 30 H3Z" fill="#e6e6ee" stroke="#c8c8d0" stroke-width="0.5"/>
<path d="M8 3 H16 V8 H7Z" fill="#3434c8"/><path d="M16 3 H25 L26 8 H16Z" fill="#f0e640"/>
<path d="M12 8 H19 V15 H11Z" fill="#3434c8"/><path d="M19 8 H26 L27 15 H19Z" fill="#7ad850"/>
<path d="M11 15 H19 V22 H10Z" fill="#f0e640"/><path d="M19 15 H27 L28 22 H19Z" fill="#f0e640"/>
<path d="M12 22 H20 V30 H11Z" fill="#f0e640"/>
<path d="M2 30 Q6 8 20 3 Q27 1 30 6" stroke="#d08a4a" stroke-width="1.6" fill="none"/>
</svg>
<svg class="a" style="left:821px;top:685px" width="31" height="31" viewBox="0 0 31 31">
<defs><radialGradient id="glb" cx="0.45" cy="0.4" r="0.65"><stop offset="0" stop-color="#3a6cff"/><stop offset="0.8" stop-color="#1e3ad0"/><stop offset="1" stop-color="#142a98"/></radialGradient></defs>
<circle cx="15.5" cy="15" r="14.5" fill="url(#glb)"/>
<path d="M8 3.5 Q14 1.5 20 3 Q22 5 20.5 8 Q17.5 9 18 12 Q16 15.5 13.5 17 Q12.5 20 11 18 Q9.5 14 7 13 Q5 10 8 3.5Z" fill="#22dd3a"/>
<path d="M14.5 22 Q19 20 23 22.5 Q25 25 22 28 Q18 29.5 15.5 27.5Z" fill="#22dd3a"/>
<path d="M22 3.5 Q28 6 29.5 13 Q27 11 24.5 10 Q23 7 22 3.5Z" fill="#22dd3a"/>
</svg>
<div class="a" style="left:1236px;top:682px;width:44px;height:37px;background:linear-gradient(90deg,#7d90a8,#8d9fb6)"></div>
<div class="a" style="left:1267px;top:684px;width:13px;height:35px;border:1px solid #4f6075;border-radius:2px;background:linear-gradient(90deg,#9fb2c8,#b7c6d6)"></div>
<svg class="a" style="left:1014px;top:699px" width="10" height="6"><path d="M1 5 L5 1 L9 5Z" fill="#fff"/></svg>
<svg class="a" style="left:1034px;top:693px" width="16" height="17" viewBox="0 0 16 17"><path d="M3 1 V16" stroke="#eef" stroke-width="1.6"/><path d="M3.5 2 Q7 0.5 9 2 Q11 3.5 14 2.5 V9 Q11 10 9 8.5 Q7 7 3.5 8.5Z" fill="#fff" stroke="#666" stroke-width="0.6"/></svg>
<svg class="a" style="left:1056px;top:695px" width="16" height="12" viewBox="0 0 16 12"><path d="M3.5 11 A3.2 3.2 0 0 1 3 4.8 A4.5 4.5 0 0 1 11.5 4 A3.5 3.5 0 0 1 12.5 11Z" fill="#fff"/><path d="M8 3.5 L5 7 H7 V10.5 H9 V7 H11Z" fill="#1a6fd8"/></svg>
<svg class="a" style="left:1079px;top:695px" width="16" height="12" viewBox="0 0 16 12"><path d="M3.5 11 A3.2 3.2 0 0 1 3 4.8 A4.5 4.5 0 0 1 11.5 4 A3.5 3.5 0 0 1 12.5 11Z" fill="#fff"/><path d="M8 3.5 L5 7 H7 V10.5 H9 V7 H11Z" fill="#1a6fd8"/></svg>
<svg class="a" style="left:1102px;top:695px" width="16" height="12" viewBox="0 0 16 12"><path d="M3.5 11 A3.2 3.2 0 0 1 3 4.8 A4.5 4.5 0 0 1 11.5 4 A3.5 3.5 0 0 1 12.5 11Z" fill="#fff"/><path d="M8 3.5 L5 7 H7 V10.5 H9 V7 H11Z" fill="#1a6fd8"/></svg>
<svg class="a" style="left:1124px;top:694px" width="16" height="14" viewBox="0 0 16 14"><path d="M1 13 h2 v-2 h-2z M4 13 h2 v-4 h-2z M7 13 h2 v-6 h-2z M10 13 h2 v-9 h-2z M13 13 h2 v-12 h-2z" fill="#ffffff" stroke="#1a1a1a" stroke-width="0.9"/></svg>
<svg class="a" style="left:1147px;top:693px" width="14" height="15" viewBox="0 0 14 15"><path d="M1 5 H4 L8 1.5 V13.5 L4 10 H1Z" fill="#f4f4f4" stroke="#555" stroke-width="0.6"/><path d="M10 4.5 Q12 7.5 10 10.5" stroke="#f4f4f4" stroke-width="1.2" fill="none"/></svg>
<svg class="a" style="left:1169px;top:693px" width="16" height="16" viewBox="0 0 16 16"><rect x="0" y="0" width="16" height="16" fill="#d8201e"/><path d="M3 13 Q6 4 10 3 Q12 6 9 10 Q7 12 10.5 11.5 L13 12.5" stroke="#fff" stroke-width="1.8" fill="none"/></svg>
<div class="t" style="left:1196px;top:688px;width:64px;text-align:center;color:#fff;font-size:11px;letter-spacing:-0.2px">02:38</div>
<div class="t" style="left:1196px;top:702px;width:64px;text-align:center;color:#fff;font-size:11px;letter-spacing:-0.2px">05/04/2021</div>
</body></html>
